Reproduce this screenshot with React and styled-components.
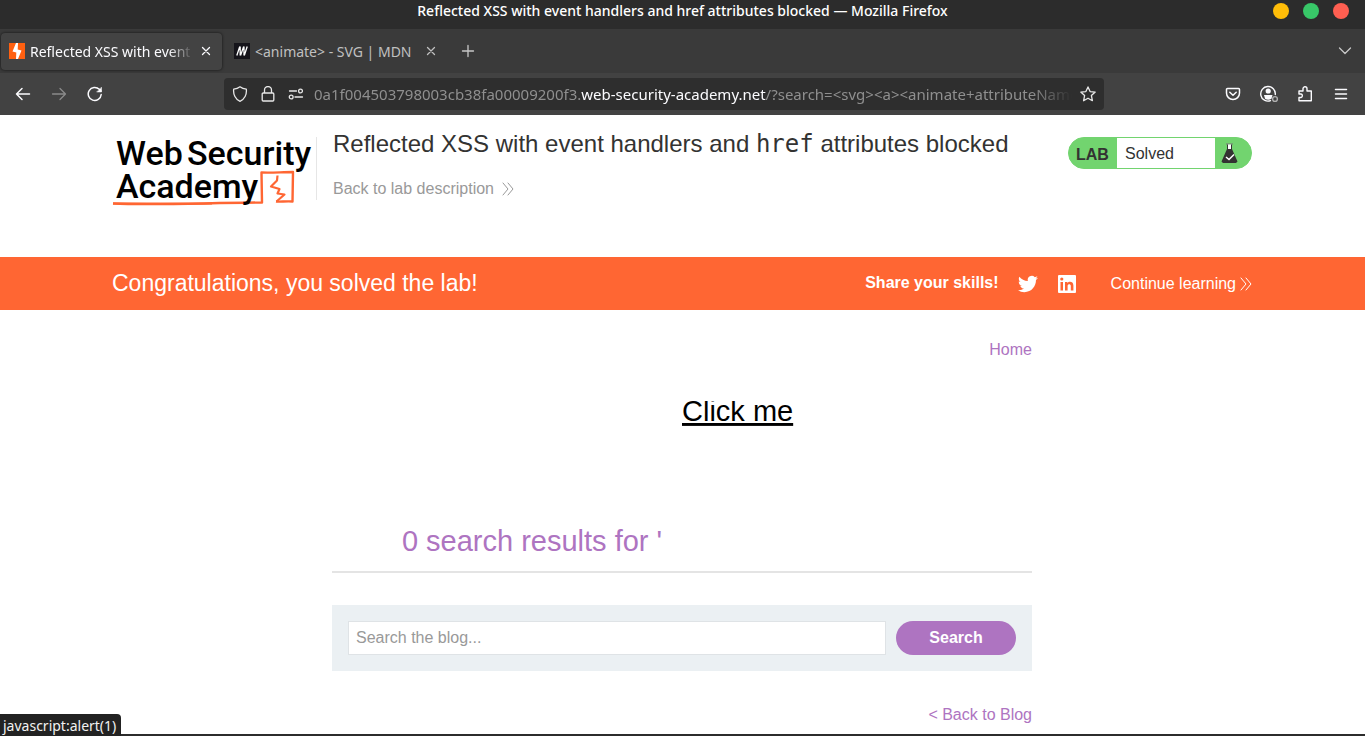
import React from "react";
import styled, { createGlobalStyle } from "styled-components";

const ui = `"Noto Sans", "Open Sans", sans-serif`;
const page = `"Liberation Sans", Arial, sans-serif`;

const Global = createGlobalStyle`
  *, *::before, *::after { box-sizing: border-box; }
  html, body, #root { height: 100%; }
  body { margin: 0; background: #fff; font: 16px/20px ${page}; color: #333332; }
  button { border: 0; padding: 0; background: none; color: inherit; font: inherit; cursor: pointer; }
  a { color: inherit; text-decoration: none; }
  h1, h2, p { margin: 0; font-weight: 400; }
`;

const Window = styled.div`
  display: flex;
  flex-direction: column;
  min-height: 100vh;
  border-bottom: 2px solid #2c2c2c;
  position: relative;
`;

const TitleBar = styled.header`
  position: relative;
  display: flex;
  justify-content: center;
  height: 29px;
  background: #2c2c2c;
  color: #fff;
  font: 500 14px/22px ${ui};
`;

const WindowControls = styled.div`
  position: absolute;
  right: 16px;
  top: 3px;
  display: flex;
  gap: 14px;
`;

const ControlDot = styled.button`
  width: 16px;
  height: 16px;
  border-radius: 50%;
  background: ${(p) => p.$color};
`;

const TabStrip = styled.nav`
  display: flex;
  align-items: center;
  height: 44px;
  padding: 0 12px 0 1px;
  background: #3a3a3a;
  color: #fbfbfe;
`;

const Tab = styled.div`
  display: flex;
  align-items: center;
  width: 221px;
  height: 37px;
  padding: 0 8px;
  gap: 5px;
  border-radius: 4px;
  font: 14px/20px ${ui};
  margin-right: ${(p) => (p.$active ? 4 : 0)}px;
  background: ${(p) => (p.$active ? "#434343" : "transparent")};
  color: ${(p) => (p.$active ? "#fbfbfe" : "#c0c0c0")};
  box-shadow: ${(p) => (p.$active ? "0 0 3px rgba(0, 0, 0, 0.7)" : "none")};
`;

const TabLabel = styled.span`
  flex: 1;
  min-width: 0;
  padding-top: 2px;
  overflow: hidden;
  white-space: nowrap;
  mask-image: ${(p) => (p.$fade ? "linear-gradient(to left, transparent, #000 24px)" : "none")};
`;

const IconButton = styled.button`
  display: flex;
  align-items: center;
  justify-content: center;
  width: ${(p) => p.$width || 16}px;
  height: 32px;
  color: ${(p) => p.$color || "inherit"};
  flex: none;
`;

const Spacer = styled.div`
  flex: 1;
`;

const Toolbar = styled.div`
  display: flex;
  align-items: center;
  justify-content: space-between;
  height: 42px;
  padding: 0 6px;
  background: #424242;
  color: #fbfbfe;
`;

const ToolGroup = styled.div`
  display: flex;
  flex: none;
  width: ${(p) => (p.$end ? 255 : 218)}px;
  justify-content: ${(p) => (p.$end ? "flex-end" : "flex-start")};
`;

const AddressBar = styled.div`
  display: flex;
  align-items: center;
  flex: 1;
  min-width: 0;
  height: 32px;
  padding: 0 8px;
  gap: 12px;
  border-radius: 4px;
  background: #2e2e2e;
  color: #e8e8e8;
`;

const Address = styled.div`
  flex: 1;
  min-width: 0;
  overflow: hidden;
  white-space: nowrap;
  font: 15px/24px ${ui};
  color: #8f8f8f;
  margin: 0 -4px 0 -2px;
  mask-image: linear-gradient(to left, transparent, #000 40px);
  b { font-weight: 400; color: #fbfbfe; }
`;

const Container = styled.div`
  display: flex;
  width: 100%;
  max-width: 1141px;
  margin: 0 auto;
  padding-right: 1px;
`;

const LabHeader = styled.header`
  height: 142px;
  padding-top: 15px;
`;

const LogoLink = styled.a`
  display: block;
  width: 205px;
  height: 63px;
  margin: 7px 16px 0 0;
  border-right: 1px solid #e6e6e6;
`;

const LogoArt = styled.svg`
  display: block;
  overflow: visible;
  font-family: Roboto, sans-serif;
  font-weight: 500;
  font-size: 34px;
`;

const LabTitle = styled.div`
  flex: 1;
  h2 { font-size: 24px; line-height: 28px; }
  code { font-family: "DejaVu Sans Mono", monospace; }
`;

const BackLink = styled.a`
  display: inline-flex;
  align-items: center;
  gap: 8px;
  margin-top: 21px;
  color: #999;
`;

const LabStatus = styled.div`
  display: flex;
  align-items: stretch;
  width: 184px;
  height: 32px;
  margin-top: 7px;
  border: 1px solid #72d46f;
  border-radius: 16px;
  background: #72d46f;
  overflow: hidden;
  line-height: 32px;
  strong { width: 48px; padding: 1px 0 0 7px; }
  p { flex: 1; padding-left: 8px; background: #fff; }
  svg { width: 36px; height: 30px; }
`;

const Banner = styled.section`
  background: #ff6633;
  color: #fff;
  ${Container} { height: 53px; align-items: center; }
  h2 { flex: 1; font-size: 23px; line-height: 28px; }
  h2, strong { padding-bottom: 2px; }
`;

const ShareLink = styled.a`
  display: flex;
  margin-left: 19px;
`;

const ContinueLink = styled.a`
  display: flex;
  align-items: center;
  gap: 4px;
  margin-left: 34px;
`;

const Blog = styled.main`
  width: 100%;
  max-width: 701px;
  padding-right: 1px;
  margin: 0 auto;
  flex: 1;
`;

const TextNav = styled.nav`
  display: flex;
  justify-content: flex-end;
  padding-top: ${(p) => p.$top}px;
  color: #ae74c1;
`;

const Results = styled.section`
  margin-top: 41px;
  height: 172px;
  border-bottom: 2px solid #e4e4e4;
  text-align: center;
  h1 { font-size: 29px; line-height: 32px; color: #ae74c1; white-space: nowrap; }
`;

const Injected = styled.svg`
  width: 300px;
  height: 150px;
  overflow: hidden;
  text { fill: #000; text-decoration: underline; }
`;

const SearchForm = styled.form`
  display: flex;
  gap: 10px;
  margin-top: 32px;
  padding: 16px;
  background: #ebf0f3;
`;

const SearchInput = styled.input`
  flex: 1;
  min-width: 0;
  height: 34px;
  padding: 0 7px;
  border: 1px solid #dfe3e6;
  background: #fff;
  font: 16px ${page};
  &::placeholder { color: #999; opacity: 1; }
`;

const SearchButton = styled.button`
  && {
    width: 120px;
    height: 34px;
    border-radius: 17px;
    background: #ae74c1;
    color: #fff;
    font-weight: 700;
  }
`;

const StatusBubble = styled.div`
  position: absolute;
  left: 0;
  bottom: -2px;
  height: 22px;
  padding: 0 5px 0 3px;
  border-top-right-radius: 4px;
  background: #222;
  color: #f2f2f2;
  font: 14px/23px ${ui};
  white-space: nowrap;
`;

const Icon = ({ size = 16, children, ...rest }) => (
  <svg width={size} height={size} viewBox="0 0 16 16" fill="none" stroke="currentColor"
    strokeWidth="1.3" strokeLinecap="round" strokeLinejoin="round" aria-hidden="true" {...rest}>
    {children}
  </svg>
);

const Close = () => <Icon><path d="M4.5 4.5l7 7m0-7l-7 7" /></Icon>;

const Chevrons = () => (
  <Icon width="12" height="14" viewBox="0 0 12 14" strokeWidth="1">
    <path d="M1 1l5 6-5 6M6 1l5 6-5 6" />
  </Icon>
);

const Logo = () => (
  <LogoArt width="200" height="70" role="img" aria-label="Web Security Academy">
    <text x="4" y="28">Web</text>
    <text x="75" y="28">Security</text>
    <path d="M1 66.500C40 68.500 90 66 150 65.500L149.500 35.500C160 36 170 35 181 35L180.500 64.500C174 64 168 65 164 64.500"
      fill="none" stroke="#ff6633" strokeWidth="2.400" strokeLinejoin="round" />
    <path d="M1 66.500C30 66 60 67 100 66.500" fill="none" stroke="#ff6633" strokeWidth="2" />
    <path d="M165.500 38.500L165 43.500L159 49.500L167.500 52L165.500 56.500L172.500 57.500L164.500 64.500"
      fill="none" stroke="#ff6633" strokeWidth="2.200" strokeLinejoin="round" />
    <text x="4" y="61">Academy</text>
  </LogoArt>
);

export default function App() {
  return (
    <>
      <Global />
      <Window>
        <TitleBar>
          <span>Reflected XSS with event handlers and href attributes blocked — Mozilla Firefox</span>
          <WindowControls>
            <ControlDot $color="#ffbd08" aria-label="Minimize" />
            <ControlDot $color="#38c768" aria-label="Maximize" />
            <ControlDot $color="#ff5f51" aria-label="Close window" />
          </WindowControls>
        </TitleBar>
        <TabStrip>
          <Tab $active>
            <svg width="16" height="16" viewBox="0 0 16 16" aria-hidden="true">
              <path fill="#ff6010" d="M0 0h16v16H0z" />
              <path fill="#fff" d="M7 0L3.500 8.500 7.300 9.500 7 16h2l3.500-8.500L8.700 6.500 9 0z" />
            </svg>
            <TabLabel $fade>Reflected XSS with event handlers</TabLabel>
            <IconButton aria-label="Close tab"><Close /></IconButton>
          </Tab>
          <Tab>
            <svg width="16" height="16" viewBox="0 0 16 16" aria-hidden="true">
              <path fill="#15141a" d="M0 0h16v16H0z" />
              <path fill="none" stroke="#fff" strokeWidth="1.300" d="M2.800 12.500L5.800 3.500M6.200 3.500V12.500M6.500 12.500L9.700 3.500M10 3.500V12.500M10.300 12.500L13.200 3.500" />
            </svg>
            <TabLabel>&lt;animate&gt; - SVG | MDN</TabLabel>
            <IconButton aria-label="Close tab"><Close /></IconButton>
          </Tab>
          <IconButton $width={42} $color="#c8c8c8" aria-label="New tab"><Icon><path d="M8 2.500v11M2.500 8h11" /></Icon></IconButton>
          <Spacer />
          <IconButton $color="#c8c8c8" aria-label="List all tabs"><Icon><path d="M2.500 5L8 10.500 13.500 5" /></Icon></IconButton>
        </TabStrip>
        <Toolbar>
          <ToolGroup>
            <IconButton $width={34} aria-label="Back"><Icon strokeWidth="1.500"><path d="M14.500 8h-13M7 2.500L1.500 8 7 13.500" /></Icon></IconButton>
            <IconButton $width={38} $color="#8a8a8a" aria-label="Forward"><Icon><path d="M1.500 8h13M9 2.500L14.500 8 9 13.500" /></Icon></IconButton>
            <IconButton $width={34} aria-label="Reload">
              <Icon strokeWidth="1.500"><path d="M14.200 8.500A6.500 6.500 0 1 1 12.300 3.300L14 5" /><path d="M14.500 1.500v4.500H10z" fill="currentColor" strokeWidth=".5" /></Icon>
            </IconButton>
          </ToolGroup>
          <AddressBar>
            <Icon><path d="M8 .8C6.500 2 4 3 1.700 3.200 1 8.500 3.500 13.500 8 15.300c4.500-1.800 7-6.800 6.300-12.100C12 3 9.500 2 8 .8z" /></Icon>
            <Icon><path d="M4.500 7V4a3.500 3.500 0 0 1 7 0v3M3.200 7h9.600a1 1 0 0 1 1 1v6a1 1 0 0 1-1 1H3.200a1 1 0 0 1-1-1V8a1 1 0 0 1 1-1z" /></Icon>
            <Icon><path d="M1.500 5h7M7 11h7.500" /><circle cx="12.500" cy="5" r="1.900" /><circle cx="3.200" cy="11" r="1.900" /></Icon>
            <Address>0a1f004503798003cb38fa00009200f3.<b>web-security-academy.net</b>/?search=&lt;svg&gt;&lt;a&gt;&lt;animate+attributeName%3D</Address>
            <IconButton aria-label="Bookmark this page">
              <Icon><path d="M8 .9l2.100 4.700 5.100.5-3.800 3.500 1 5.100L8 12.200l-4.400 2.500 1-5.100L.8 6.100l5.100-.5z" /></Icon>
            </IconButton>
          </AddressBar>
          <ToolGroup $end>
            <IconButton $width={36} aria-label="Save to Pocket">
              <Icon strokeWidth="1.500"><path d="M2.500 2.500h11a1 1 0 0 1 1 1V7a6.500 6.500 0 0 1-13 0V3.500a1 1 0 0 1 1-1zM4.800 6.300L8 9.300l3.200-3" /></Icon>
            </IconButton>
            <IconButton $width={36} aria-label="Account">
              <Icon size={20} viewBox="0 0 20 20" strokeWidth="1.400">
                <path d="M11.500 16.700A7.300 7.300 0 1 1 16.300 10.500" />
                <circle cx="9.200" cy="7" r="2.600" fill="currentColor" stroke="none" />
                <path d="M5 11h8.500l-1 3.800q-3.300 1.700-6.500 0z" fill="currentColor" stroke="none" />
                <circle cx="16" cy="15" r="2.400" stroke="#b0b0b0" />
              </Icon>
            </IconButton>
            <IconButton $width={36} aria-label="Extensions">
              <Icon strokeWidth="1.400"><path d="M2 6.500V5h4V2.800a2 2 0 0 1 4 0V5h4.300v9.800H2v-3.300h2a1.800 1.800 0 0 0 0-3.500H2z" /></Icon>
            </IconButton>
            <IconButton $width={36} aria-label="Open application menu"><Icon strokeWidth="1.500"><path d="M2.500 3.500h11M2.500 8h11M2.500 12.500h11" /></Icon></IconButton>
          </ToolGroup>
        </Toolbar>
        <LabHeader>
          <Container>
            <LogoLink href="#academy"><Logo /></LogoLink>
            <LabTitle>
              <h2>Reflected XSS with event handlers and <code>href</code> attributes blocked</h2>
              <BackLink href="#description">Back to lab description <Chevrons /></BackLink>
            </LabTitle>
            <LabStatus>
              <strong>LAB</strong>
              <p>Solved</p>
              <svg viewBox="0 0 36 30" aria-hidden="true">
                <path d="M11 5.500h7v1h-7z" fill="#777" />
                <path d="M12.500 6.500h4V11h-4z" fill="#fff" />
                <path d="M12 6.500h1V11h3V6.500h1V11l5.500 12.500L21 25H8l-1.500-1.500L12 11z" fill="#333332" />
                <path d="M11 19l3 2.500 5-5" fill="none" stroke="#fff" strokeWidth="1.500" />
              </svg>
            </LabStatus>
          </Container>
        </LabHeader>
        <Banner>
          <Container>
            <h2>Congratulations, you solved the lab!</h2>
            <strong>Share your skills!</strong>
            <ShareLink href="#twitter" aria-label="Share on Twitter">
              <svg width="20" height="20" viewBox="0 0 24 24" fill="#fff" aria-hidden="true">
                <path d="M23.953 4.570a10 10 0 01-2.825.775 4.958 4.958 0 002.163-2.723c-.951.555-2.005.959-3.127 1.184a4.920 4.920 0 00-8.384 4.482C7.690 8.095 4.067 6.130 1.640 3.162a4.822 4.822 0 00-.666 2.475c0 1.710.870 3.213 2.188 4.096a4.904 4.904 0 01-2.228-.616v.060a4.923 4.923 0 003.946 4.827 4.996 4.996 0 01-2.212.085 4.936 4.936 0 004.604 3.417 9.867 9.867 0 01-6.102 2.105c-.390 0-.779-.023-1.170-.067a13.995 13.995 0 007.557 2.209c9.053 0 13.998-7.496 13.998-13.985 0-.210 0-.420-.015-.630A9.935 9.935 0 0024 4.590z" />
              </svg>
            </ShareLink>
            <ShareLink href="#linkedin" aria-label="Share on LinkedIn">
              <svg width="20" height="20" viewBox="0 0 20 20" aria-hidden="true">
                <rect x="1" y="1" width="18" height="18" rx="1" fill="#fff" />
                <path fill="#ff6633" d="M3.500 8H6v8.500H3.500zM8 8h2.400v1.200c1.300-2.200 6-2 6 2.200v5.100h-2.600v-4.700c0-2.300-3.200-2.100-3.200 0v4.700H8z" />
                <circle cx="4.800" cy="5" r="1.600" fill="#ff6633" />
              </svg>
            </ShareLink>
            <ContinueLink href="#learn">Continue learning <Chevrons /></ContinueLink>
          </Container>
        </Banner>
        <Blog>
          <TextNav $top={30}><a href="#home">Home</a></TextNav>
          <Results>
            <h1>
              0 search results for '
              <Injected><a href="#alert"><text x="20" y="20">Click me</text></a></Injected>
            </h1>
          </Results>
          <SearchForm onSubmit={(e) => e.preventDefault()}>
            <SearchInput type="text" placeholder="Search the blog..." aria-label="Search the blog" />
            <SearchButton type="submit">Search</SearchButton>
          </SearchForm>
          <TextNav $top={34}><a href="#blog">&lt; Back to Blog</a></TextNav>
        </Blog>
        <StatusBubble>javascript:alert(1)</StatusBubble>
      </Window>
    </>
  );
}
